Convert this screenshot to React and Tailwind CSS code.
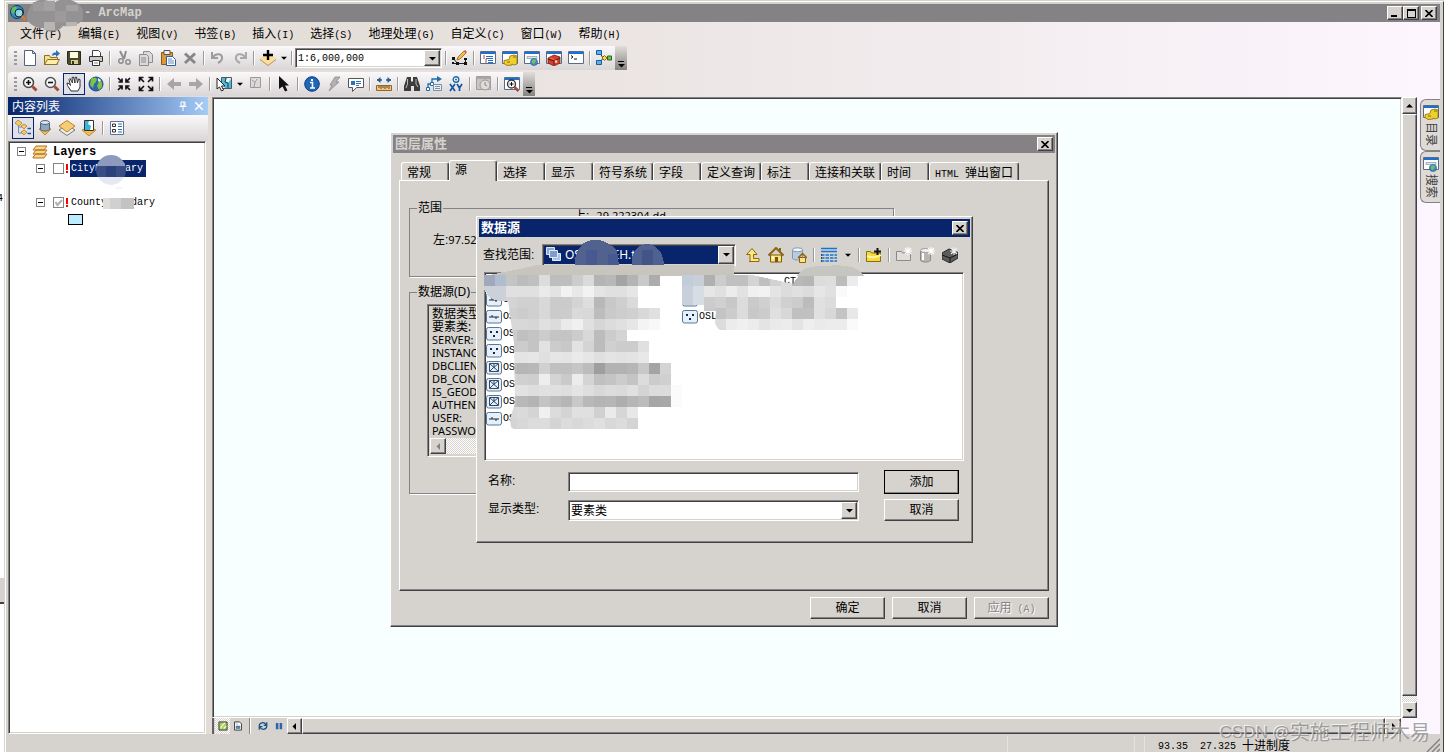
import { useState } from 'react';
import clsx from 'clsx';

const raised = 'border border-t-white border-l-white border-r-[#424142] border-b-[#424142] shadow-[inset_-1px_-1px_0_#848284] bg-[#d6d3ce]';
const sunken = 'border border-t-[#848284] border-l-[#848284] border-r-white border-b-white shadow-[inset_1px_1px_0_#424142,inset_-1px_-1px_0_#d6d3ce]';
const barBg = 'bg-linear-to-b from-[#fbf8fb] to-[#dad6d6]';
const hatch = 'bg-[repeating-conic-gradient(#fff_0_25%,#d6d3ce_0_50%)] bg-size-[2px_2px]';
const mono = 'font-["Liberation_Mono","Noto_Sans_CJK_SC",monospace] text-[10px]';

const windowFrame = (
    <>
        <path d="M.5 1.5h15v12H.5z" fill="#fff" stroke="#5a6b84" />
        <path d="M1 2h14v2H1z" fill="#1d6fd0" />
    </>
);

const icons = {
    newDoc: <path d="M2.500 .5h8l3 3v12h-11zM10.500 .5v3h3" fill="#fff" stroke="#56647a" />,
    open: <><path d="M.5 14.500v-9h5l1 2h7v7z" fill="#f6e08c" stroke="#8c7020" /><path d="M.5 14.500l3-5h12l-3 5z" fill="#ffeea8" stroke="#8c7020" /><path d="M8 6c0-3 2-4 4-3.500V0l4 3.500L12 7V5c-2 0-3 0-4 1z" fill="#2b71b8" /></>,
    save: <><path d="M1.500 1.500h13v13h-12l-1-1z" fill="#4c4a2c" stroke="#2c2a18" /><path d="M4 2h8v6H4z" fill="#fffbe0" /><path d="M5 10h7v4H5z" fill="#d9cf92" /><path d="M6 11h2v3H6z" fill="#333" /></>,
    print: <><path d="M4.500 6V.5h6l2 2V6" fill="#fff" stroke="#444" /><path d="M1.500 6.500h13v5h-13z" fill="#c9c9c9" stroke="#333" /><path d="M4.500 10.500h7v5h-7z" fill="#fff" stroke="#333" /><path d="M6 13h4" stroke="#888" /><path d="M12 8h2v1h-2z" fill="#e8c020" /></>,
    cut: <><path d="M4 1l4 8M10 1L8 9" stroke="#8e8e8e" strokeWidth="2" fill="none" /><circle cx="5" cy="11" r="2.200" fill="none" stroke="#8e8e8e" strokeWidth="1.500" /><circle cx="12" cy="12" r="2.200" fill="none" stroke="#8e8e8e" strokeWidth="1.500" /></>,
    copy: <><path d="M5.500 1.500h6l3 3v8h-9z" fill="#dcdad8" stroke="#8e8e8e" /><path d="M1.500 4.500h7l2 2v9h-9z" fill="#dcdad8" stroke="#8e8e8e" /><path d="M3 8h5M3 10h5M3 12h5" stroke="#8e8e8e" /></>,
    paste: <><path d="M1.500 2.500h11v12h-11z" fill="#d99a3c" stroke="#8a5a18" /><path d="M4 .5h6v4H4z" fill="#eee" stroke="#555" /><path d="M6.500 6.500h6l3 3v6h-9z" fill="#fff" stroke="#2f5f94" /><path d="M8 9h4M8 11h6M8 13h6" stroke="#5d8cc0" /></>,
    remove: <path d="M3 3.500l10 9.500M13 3.500L3 13" stroke="#8a8886" strokeWidth="3" />,
    undo: <path d="M2 2v6h6M3 7c3-4 10-4 9 2-.5 2-2 3-4 4" fill="none" stroke="#9c9c9c" strokeWidth="2" />,
    redo: <path d="M14 2v6H8M13 7C10 3 3 3 4 9c.5 2 2 3 4 4" fill="none" stroke="#a8a8a8" strokeWidth="2" />,
    addData: <><path d="M0 8l8-4 8 4-8 6z" fill="#ffdf90" /><path d="M0 9l8 6 8-6v1l-8 6-8-6z" fill="#c98a2c" /><path d="M8 0v10M3 5h10" stroke="#000" strokeWidth="2.400" /></>,
    editor: <><path d="M1.500 8.500l4 5h8M1.500 13.500l4 0M13.500 13.500v-5" stroke="#222" fill="none" /><path d="M0 7h3v3H0zM4 12h3v3H4zM0 12h2v2H0zM12 12h3v3h-3zM12 8h3v2h-3z" fill="#111" /><path d="M5 10l1-3 6-6 2 2-6 6z" fill="#f7bf4a" stroke="#94601c" strokeWidth=".8" /><path d="M12 1l2 2 1-1-2-2z" fill="#e05050" /></>,
    toc: <>{windowFrame}<path d="M3 6h2M3 8h2M5 10h2M5 12h2" stroke="#d33" /><path d="M6 6.500h7M6 8.500h7M8 10.500h5M8 12.500h5" stroke="#1d6fd0" /></>,
    catalog: <>{windowFrame}<path d="M8 6l4-1 3 1v8l-3 1-2-1v1l-5 .500-3-2v-3l5-1z" fill="#efcf2f" stroke="#8a6d00" strokeWidth=".8" /><path d="M11 7h3M5 12h3" stroke="#8a6d00" /></>,
    search: <>{windowFrame}<path d="M3 6.500h10v2H3z" fill="#dfe6ee" stroke="#8296aa" strokeWidth=".7" /><circle cx="10" cy="12" r="3.600" fill="#3e86cc" stroke="#2c5f94" strokeWidth=".6" /><path d="M8 10l3-1 1 2-2 3-2-1z" fill="#74c060" /></>,
    toolbox: <>{windowFrame}<path d="M2 8l6-3 6 2v6l-6 3-6-3z" fill="#d4402c" stroke="#7c1c10" strokeWidth=".8" /><path d="M2 9l6 2 6-3M8 11v4" fill="none" stroke="#661408" /><path d="M4 8l4 1.500M9 10.500h2v2H9z" fill="#eee" stroke="#f0a090" strokeWidth=".6" /></>,
    python: <>{windowFrame}<path d="M3 5.500l2 1.500-2 1.500M6 9h3" fill="none" stroke="#111" /></>,
    model: <><path d="M4 3l3 5-3 5M7 8h6" fill="none" stroke="#333" /><path d="M.5 .5h5v4h-5zM.5 10.500h5v4h-5z" fill="#56b4f0" stroke="#14609c" /><path d="M6 8l2.500-2.500L11 8l-2.500 2.500z" fill="#ffd84a" stroke="#8c6a10" /><path d="M11.500 6h4v4h-4z" fill="#6cc05c" stroke="#246c1c" /></>,
    zoomIn: <><circle cx="6.500" cy="6.500" r="5" fill="#f4f8fa" stroke="#444" strokeWidth="1.500" /><path d="M4 6.500h5M6.500 4v5" stroke="#111" strokeWidth="1.600" /><path d="M10.500 10.500l4 4" stroke="#a44a36" strokeWidth="3" /></>,
    zoomOut: <><circle cx="6.500" cy="6.500" r="5" fill="#f4f8fa" stroke="#555" strokeWidth="1.500" /><path d="M4 6.500h5" stroke="#111" strokeWidth="1.600" /><path d="M10.500 10.500l4 4" stroke="#a44a36" strokeWidth="3" /></>,
    pan: <path d="M5 15L1.500 9.500 1 7l2 .5 1.500 2L3 3.500 4 2.500 6.500 7 6 1.500 7.500 1 9 7V1.500l1.500-.5L11.500 7l1-4 1.500.5V11l-2 4z" fill="#fff" stroke="#333" />,
    globe: <><circle cx="8" cy="8" r="7" fill="#2c66b0" stroke="#1c4c88" /><path d="M3 3c3-2 5-1 6 0L8 6 6 8l-1 4-3-3zM11 5l3 1v5l-3 3-2-4z" fill="#7cc444" /><path d="M10 2l3 2-1 2-2-1z" fill="#e8f4c0" /></>,
    zoomInFixed: <path d="M2 2l3 3M14 2l-3 3M2 14l3-3M14 14l-3-3M6 2.500V6H2.500M10 2.500V6h3.500M6 13.500V10H2.500M10 13.500V10h3.500" fill="none" stroke="#111" strokeWidth="1.700" />,
    zoomOutFixed: <path d="M2 2l4 4M14 2l-4 4M2 14l4-4M14 14l-4-4M5.500 1.500h-4v4M10.500 1.500h4v4M5.500 14.500h-4v-4M10.500 14.500h4v-4" fill="none" stroke="#111" strokeWidth="1.700" />,
    back: <path d="M1 8l7-6v4h7v4H8v4z" fill="#a8a6a4" />,
    forward: <path d="M15 8L8 2v4H1v4h7v4z" fill="#a8a6a4" />,
    selectFeatures: <><path d="M5.500 1.500h10v11h-10z" fill="#dff4fa" stroke="#555" /><path d="M6 2h5L9 5l3 2 3-4v9H9L6 6z" fill="#44bfe0" /><path d="M10 2l-1 4 3 1v5" stroke="#333" fill="none" /><path d="M1 2l8 8H5.500l2 4-2 1-2-4L1 13z" fill="#fff" stroke="#222" /></>,
    clearSelection: <path d="M2.500 1.500h10v10h-10zM4 4l3 2 2-3M7 6l-1 5" fill="#dcdad8" stroke="#9c9a98" />,
    cursor: <path d="M3 0l10 9.500H9l2.500 5-2.500 1-2.500-5L3 13z" fill="#111" />,
    identify: <><circle cx="8" cy="8" r="7.300" fill="#1d66b8" stroke="#0c3c80" /><path d="M6 6.500h2.500v5M6 12h5" stroke="#fff" strokeWidth="1.600" fill="none" /><path d="M7 3h2v2H7z" fill="#fff" /></>,
    bolt: <path d="M9 1h5l-4 5h3L3 15l3-6H4z" fill="#b4b2b0" stroke="#8e8c8a" strokeWidth=".8" />,
    popup: <><path d="M.5 2.500h15v9h-7l-4 4v-4h-4z" fill="#fff" stroke="#555" /><path d="M3 5h4v4H3z" fill="#2b71b8" /><path d="M8 5.500h5M8 7.500h5M8 9.500h3" stroke="#2b71b8" /></>,
    measure: <><path d="M1 4h5M10 4h5" stroke="#1c5c9c" strokeWidth="1.500" /><path d="M4.500 1L1 4l3.500 3zM11.500 1L15 4l-3.500 3z" fill="#1c5c9c" /><path d="M.5 9.500h15v5H.5z" fill="#ecc880" stroke="#94642c" /><path d="M3 10v2M5 10v3M7 10v2M9 10v3M11 10v2M13 10v3" stroke="#6c441c" /></>,
    find: <><path d="M3 1h4v4l1 1 1-1V1h4l3 9v5h-6v-5H7v5H0v-5z" fill="#3c3c3c" /><path d="M3.500 3v5L2 12M12 3v5l2 3" stroke="#b8b8b8" fill="none" /></>,
    findRoute: <><path d="M2 13V8h4V3h8" stroke="#1c6cac" fill="none" strokeWidth="1.300" /><path d="M11 0l5 3-5 3z" fill="#1c6cac" /><path d="M.5 11.500h3v3h-3zM4.500 6.500h3v3h-3z" fill="#fff" stroke="#1c6cac" /><path d="M7.500 8.500h8v6h-8z" fill="#e8f0f4" stroke="#7690a4" /><path d="M9 10.500h5M9 12.500h5" stroke="#7690a4" /></>,
    goToXY: <><circle cx="8" cy="3.500" r="2.800" fill="#fff" stroke="#1c6cac" strokeWidth="1.400" /><circle cx="8" cy="3.500" r="1" fill="#1c6cac" /><path d="M2 8l5 7M7 8l-5 7M9 8l2.500 4L14 8M11.500 12v3" stroke="#1554a0" strokeWidth="1.700" fill="none" /></>,
    time: <><path d="M.5 .5h14v13H.5z" fill="#c8c6c2" stroke="#a09e9c" /><path d="M1 1h13v2H1z" fill="#aaa8a6" /><circle cx="9" cy="9" r="5" fill="#dedcd8" stroke="#9c9a98" /><path d="M9 6v3l2 1" stroke="#888" fill="none" /></>,
    viewer: <>{windowFrame}<circle cx="7.500" cy="8" r="4" fill="#f4f8fa" stroke="#333" strokeWidth="1.300" /><path d="M5.500 8h4M7.500 6v4" stroke="#111" /><path d="M10.500 11l4 4" stroke="#a44a36" strokeWidth="2.500" /></>,
    byOrder: <><path d="M3.500 6v7H8M3.500 7H8" stroke="#7890a8" fill="none" /><path d="M0 3l3-3 4 3-3 3zM6 6l3-2 3 2-3 3zM6 12l3-2 3 2-3 3z" fill="#f4c86c" stroke="#b4822c" strokeWidth=".8" /><path d="M12.500 8.500H16M12.500 13.500H16" stroke="#1c5c9c" strokeWidth="1.500" /></>,
    bySource: <><path d="M2 9l6 6 6-6-6-2z" fill="#f6bc4c" stroke="#b47c1c" strokeWidth=".8" /><path d="M3.500 2.500v7c2 2 7 2 9 0v-7z" fill="#8fa6be" stroke="#4c627c" /><ellipse cx="8" cy="2.500" rx="4.500" ry="2" fill="#dbe6f0" stroke="#4c627c" /></>,
    byVisibility: <><path d="M0 10l8-5 8 5-8 5.500z" fill="#eee" stroke="#777" /><path d="M0 6l8-5.500L16 6l-8 6z" fill="#f8cc74" stroke="#b4822c" /></>,
    bySelection: <><path d="M1 10l7 6 7-6-7-3z" fill="#f6bc4c" stroke="#b47c1c" strokeWidth=".8" /><path d="M3.500 .5h9v10h-9z" fill="#fff" stroke="#333" /><path d="M4 1h4L7 4l3 2-1 4H4z" fill="#36b4dc" /></>,
    options: <><path d="M1.500 1.500h13v13h-13z" fill="#fff" stroke="#5a7494" /><path d="M3.500 4h3v2.500h-3zM3.500 9.500h3V12h-3z" fill="#fff" stroke="#333" /><path d="M9 4h4M9 6.500h4M9 9.500h4M9 12h4" stroke="#2b71b8" /></>,
    layers: <path d="M1 13l3-3h11l-3 4H1zM1 10l3-4h11l-3 4zM1 6l3-4h11l-3 4z" fill="#f8d48c" stroke="#b0741c" />,
    up: <path d="M4 14.500h10v-3H8.500v-4H12L7 1.500 1.500 7.500h3.500v7z" fill="#ffe680" stroke="#8c6a08" />,
    home: <><path d="M2.500 8h11v7h-11z" fill="#ffe27c" stroke="#7c5c10" /><path d="M.5 8.500L8 1l7.500 7.500M12 4V1" stroke="#8c6410" strokeWidth="2" fill="none" /><path d="M7 10h3v5H7z" fill="#7c5410" /><path d="M4 9.500h2v2H4z" fill="#fff" /></>,
    homeDb: <><path d="M1.500 2.500v9c2 2 8 2 10 0v-9z" fill="#b8cde2" stroke="#7f97b0" /><ellipse cx="6.500" cy="2.800" rx="5" ry="2" fill="#eef5fb" stroke="#7f97b0" /><path d="M8.500 10.500h6v5h-6z" fill="#ffe27c" stroke="#8c6410" /><path d="M7 11l4.500-4.500L16 11" stroke="#8c6410" fill="none" strokeWidth="1.500" /></>,
    details: <><path d="M0 1.500h16M0 4.500h16" stroke="#1874d0" strokeWidth="1.600" /><path d="M0 8h16M0 11h16M0 14h16" stroke="#1874d0" strokeWidth="1.300" strokeDasharray="3.500 1" /><path d="M.5 7v9" stroke="#444" strokeDasharray="2 1" /></>,
    connect: <><path d="M.5 14.500V4.500h4l1 1.500h9v8.500z" fill="#f8d93c" stroke="#86700c" /><path d="M1 9c5 2 9 2 14-1" stroke="#fff4a8" strokeWidth="2" /><path d="M11.500 1v7M8 4.500h7" stroke="#111" strokeWidth="2" /></>,
    newFolder: <><path d="M.5 13.500v-9h5l1 1.500h8v7.500z" fill="#e0dedb" stroke="#8c8a88" /><path d="M12 0v8M8 4h8M9 1l6 6M15 1L9 7" stroke="#fff" strokeWidth="1.100" /></>,
    newDb: <><path d="M1.500 3.500v10c2 2 8 2 10 0v-10z" fill="#b8b6b4" stroke="#8c8a88" /><ellipse cx="6.500" cy="3.500" rx="5" ry="2" fill="#f4f4f4" stroke="#999" /><path d="M4 6v7" stroke="#fff" strokeWidth="2" /><path d="M12 0v8M8 4h8M9 1l6 6M15 1L9 7" stroke="#fff" strokeWidth="1.100" /></>,
    newToolbox: <><path d="M0 6l7-4 9 3v6l-8 5-8-4z" fill="#5c5c5c" stroke="#2c2c2c" /><path d="M0 8l8 3 8-4M8 11v5" stroke="#161616" fill="none" /><path d="M12 0v8M8 4h8M9 1l6 6M15 1L9 7" stroke="#eee" strokeWidth="1.100" /></>,
    dataset: <><path d="M.5 .5h8v7h-8z" fill="#8fa9d4" stroke="#dbe6f8" /><path d="M6.500 6.500h8v7h-8z" fill="#a9bfe4" stroke="#e6eefa" /><path d="M3.500 3.500h8v7h-8z" fill="#7f9ccc" stroke="#dbe6f8" /></>,
    mapView: <><path d="M1.500 1.500h13v13h-13z" fill="#a8cc5c" stroke="#333" strokeWidth="1.500" /><path d="M4 12l3-5 4-4M9 12l4-4" stroke="#f4f8d0" strokeWidth="2" /></>,
    layoutView: <><path d="M2.500 1.500h8l3 3v10h-11z" fill="#fff" stroke="#333" strokeWidth="1.500" /><path d="M5 8h6v4H5zM5 5h3" fill="#4c8cc8" stroke="#333" strokeWidth=".6" /></>,
    refresh: <path d="M2 8c0-6 8-7 11-2M14 2v5H9M14 8c0 6-8 7-11 2M2 14V9h5" stroke="#14508c" strokeWidth="2" fill="none" />,
    pause: <path d="M3 3h4v10H3zM9 3h4v10H9z" fill="#2c64ac" />,
};

function Icon({ name, className = 'h-4 w-4' }) {
    return (
        <svg viewBox="0 0 16 16" fill="none" className={clsx('shrink-0', className)} aria-hidden="true">
            {icons[name]}
        </svg>
    );
}

function Arrow({ dir = 'down', className = 'h-[7px] w-[7px] fill-black' }) {
    const paths = { down: 'M0 2h7L3.500 5.500z', up: 'M0 5.500h7L3.500 2z', left: 'M5 0v7L1.500 3.500z', right: 'M2 0v7l3.500-3.500z' };
    return <svg viewBox="0 0 7 7" className={clsx('shrink-0', className)} aria-hidden="true"><path d={paths[dir]} /></svg>;
}

function Separator() {
    return <span className="mx-[2px] h-[14px] w-[2px] shrink-0 border-l border-[#9c9a98] border-r border-r-white" />;
}

function ToolButton({ name, pressed }) {
    return (
        <button type="button" aria-label={name} className={clsx('flex h-[22px] w-[22px] shrink-0 items-center justify-center', pressed && 'border border-[#08246b] bg-[#dfe0ea]')}>
            <Icon name={name} />
        </button>
    );
}

function Toolbar({ items }) {
    return (
        <div className={clsx('flex h-6 items-center self-start rounded-l', barBg)}>
            <span className="mr-[2px] ml-[6px] h-[14px] w-[3px] bg-[repeating-linear-gradient(#9c9a98_0_2px,transparent_2px_4px)]" />
            {items.map((item, i) => {
                if (item === '|') return <Separator key={i} />;
                if (item === 'v') return <button key={i} type="button" aria-label="more" className="flex w-[10px] justify-center"><Arrow className="h-[6px] w-[6px] fill-black" /></button>;
                if (item === 'scale') return <ScaleBox key={i} />;
                return <ToolButton key={i} name={item} pressed={item === 'pan'} />;
            })}
            <button type="button" aria-label="toolbar options" className="flex h-6 w-3 flex-col items-center justify-end bg-linear-to-b from-[#e0dddb] to-[#85837f] pb-px">
                <span className="h-px w-[6px] bg-black" />
                <Arrow />
            </button>
        </div>
    );
}

function ScaleBox() {
    return (
        <div className={clsx('mr-px flex h-5 w-[147px] bg-white p-px', sunken)}>
            <select aria-label="scale" className={clsx('min-w-0 flex-1 appearance-none bg-transparent pl-px outline-none', mono)}>
                <option>1:6,000,000</option>
            </select>
            <span className={clsx('flex w-4 items-center justify-center', raised)}><Arrow /></span>
        </div>
    );
}

const menus = [['文件', 'F'], ['编辑', 'E'], ['视图', 'V'], ['书签', 'B'], ['插入', 'I'], ['选择', 'S'], ['地理处理', 'G'], ['自定义', 'C'], ['窗口', 'W'], ['帮助', 'H']];
const standardTools = ['newDoc', 'open', 'save', 'print', '|', 'cut', 'copy', 'paste', 'remove', '|', 'undo', 'redo', '|', 'addData', 'v', '|', 'scale', '|', 'editor', '|', 'toc', 'catalog', 'search', 'toolbox', 'python', '|', 'model'];
const navTools = ['zoomIn', 'zoomOut', 'pan', 'globe', '|', 'zoomInFixed', 'zoomOutFixed', '|', 'back', 'forward', '|', 'selectFeatures', 'v', 'clearSelection', '|', 'cursor', '|', 'identify', 'bolt', 'popup', '|', 'measure', '|', 'find', 'findRoute', 'goToXY', '|', 'time', '|', 'viewer'];

function TitleBar() {
    return (
        <header className="relative flex h-[18px] shrink-0 items-center bg-[#848284] pl-[2px] text-[#d6d3ce]">
            <svg viewBox="0 0 16 16" className="h-4 w-4"><circle cx="7" cy="7" r="6.500" fill="#2c8ccc" stroke="#063c74" /><path d="M2 3c3-3 6-1 5 2L4 9 1 7zM8 8l4-3 1 4-4 3z" fill="#5cc060" /><circle cx="9" cy="8" r="4" fill="#b8ecf8" fillOpacity=".7" stroke="#123" /><path d="M12 11l3.500 4" stroke="#e07828" strokeWidth="2.500" /></svg>
            <h1 className="ml-[58px] font-['Liberation_Mono',monospace] text-[12px] font-bold whitespace-pre">- ArcMap</h1>
            <svg viewBox="0 0 58 34" className="absolute -top-[5px] left-[19px] h-[34px] w-[58px]" aria-hidden="true">
                <path d="M2 10C6 0 18-2 26 5c8-8 24-6 30 6v10c-6 6-14 7-20 6-4 6-15 8-20 2-8 0-15-5-17-10z" fill="#959294" />
                <path d="M6 3h11v9H6zM28 12h11v11H28z" fill="#9c9a9b" />
                <path d="M17 2h11v10H17zM39 6h12v6H39z" fill="#a3a1a1" />
                <path d="M17 23h11v8H17zM39 23h11v4H39z" fill="#b8b5b2" />
            </svg>
            <div className="ml-auto flex pr-[3px]">
                <button type="button" aria-label="minimize" className={clsx('flex h-[14px] w-4 items-end pb-[2px] pl-[3px]', raised)}><span className="h-[2px] w-[6px] bg-black" /></button>
                <button type="button" aria-label="maximize" className={clsx('flex h-[14px] w-4 items-center justify-center', raised)}><span className="h-[9px] w-[9px] border border-t-2 border-black" /></button>
                <CloseButton className="ml-[2px]" />
            </div>
        </header>
    );
}

function CloseButton({ className }) {
    return (
        <button type="button" aria-label="close" className={clsx('flex h-[14px] w-4 items-center justify-center', raised, className)}>
            <svg viewBox="0 0 8 7" className="h-[7px] w-2"><path d="M.5 0l7 7M7.500 0l-7 7" stroke="#000" strokeWidth="1.600" /></svg>
        </button>
    );
}

function Expander() {
    return <button type="button" aria-label="collapse" className="flex h-[9px] w-[9px] items-center justify-center border border-[#848284]"><span className="h-px w-[5px] bg-black" /></button>;
}

function LayerRow({ name, checked, selected, children }) {
    const [on, setOn] = useState(checked);
    return (
        <div className="relative flex h-[17px] items-center pl-[25px]">
            <Expander />
            <label className="ml-2 flex h-[17px] items-center">
                <span className="relative flex h-[11px] w-[11px]">
                    <input type="checkbox" checked={on} onChange={() => setOn(!on)} className="h-[11px] w-[11px] appearance-none border border-[#848284] bg-white" />
                    {on && <svg viewBox="0 0 11 11" className="pointer-events-none absolute inset-0"><path d="M2.500 5l2 3L9 3" stroke="#b0b0b0" strokeWidth="2" fill="none" /></svg>}
                </span>
                <span className="mr-px flex w-[5px] flex-col items-center gap-px"><span className="h-[6px] w-[2px] bg-[#f00]" /><span className="h-[2px] w-[2px] bg-[#f00]" /></span>
                <span className={clsx('h-[17px] px-px pr-[3px] leading-[17px]', mono, selected && 'bg-[#08246b] text-white')}>{name}</span>
            </label>
            {children}
        </div>
    );
}

function ContentsPanel() {
    return (
        <aside className="flex w-[200px] shrink-0 flex-col">
            <div className="flex h-[18px] items-center bg-linear-to-r from-[#08246b] to-[#a5cbf7] pr-[5px] pl-1 text-[12px] text-white">
                <span className="pt-[2px] leading-4">内容列表</span>
                <svg viewBox="0 0 8 10" className="mr-2 ml-auto h-[10px] w-2"><path d="M2 1h4v4H2zM5 1v4M.5 5.500h7M4 6v4" stroke="#fff" fill="none" /></svg>
                <svg viewBox="0 0 8 8" className="h-2 w-2"><path d="M0 0l8 8M8 0L0 8" stroke="#fff" strokeWidth="1.500" /></svg>
            </div>
            <div className={clsx('flex h-[26px] items-center pl-1', barBg)}>
                <ToolButton name="byOrder" pressed />
                <ToolButton name="bySource" />
                <ToolButton name="byVisibility" />
                <ToolButton name="bySelection" />
                <Separator />
                <ToolButton name="options" />
            </div>
            <div className={clsx('mr-[2px] flex-1 bg-white pt-px pl-[2px]', sunken)}>
                <div className="flex h-[17px] items-center pl-[6px]">
                    <Expander />
                    <Icon name="layers" className="ml-[6px] h-4 w-4" />
                    <span className="ml-[5px] font-['Liberation_Mono',monospace] text-[12px] font-bold">Layers</span>
                </div>
                <LayerRow name="CityBoundary" selected>
                    <svg viewBox="0 0 32 34" className="absolute -top-[5px] left-[84px] h-[34px] w-8">
                        <clipPath id="cityMask"><circle cx="16" cy="15" r="15" /></clipPath>
                        <g clipPath="url(#cityMask)">
                            <path d="M0 0h32v11H0z" fill="#8e9abd" />
                            <path d="M0 11h32v11H0z" fill="#384d86" />
                            <path d="M11 11h10v11H11z" fill="#2c417c" />
                            <path d="M0 22h32v9H0z" fill="#e5e9f4" />
                        </g>
                        <path d="M21 33h6" stroke="#e5e9f4" />
                    </svg>
                </LayerRow>
                <div className="mt-[17px]">
                    <LayerRow name="CountyBoundary" checked>
                        <svg viewBox="0 0 31 11" className="absolute top-[4px] left-[92px] h-[11px] w-[31px]">
                            <path d="M0 0h7v11H0z" fill="#ddd" /><path d="M7 0h11v11H7z" fill="#d0d0d0" /><path d="M18 0h13v11H18z" fill="#c3c3c3" />
                        </svg>
                    </LayerRow>
                </div>
                <div className="mt-[3px] ml-[57px] h-[11px] w-[15px] border border-black bg-[#bdebff]" />
            </div>
        </aside>
    );
}

function DockTab({ icon, label }) {
    return (
        <button type="button" className="flex h-[52px] flex-col items-center gap-[2px] rounded-l-md border border-r-0 border-[#848284] bg-[#dedad6] pt-1 text-[12px] text-[#424142]">
            <Icon name={icon} />
            <span className="leading-[14px] [text-orientation:sideways] [writing-mode:vertical-rl]">{label}</span>
        </button>
    );
}

function MapArea() {
    return (
        <main className="mr-[3px] flex min-w-0 flex-1 flex-col">
            <div className="flex min-h-0 flex-1">
                <div className={clsx('flex-1 bg-[#f7ffff]', sunken)} />
                <div className={clsx('flex w-[15px] flex-col', hatch)}>
                    <button type="button" aria-label="scroll up" className={clsx('flex h-[17px] items-center justify-center', raised)}><Arrow dir="up" /></button>
                    <div className={clsx('flex-1', raised)} />
                    <div className="h-[6px]" />
                    <button type="button" aria-label="scroll down" className={clsx('flex h-4 items-center justify-center', raised)}><Arrow /></button>
                </div>
            </div>
            <div className="mr-4 flex h-4 items-stretch bg-[#d6d3ce]">
                <span className="w-[3px] border-l-2 border-[#636163]" />
                <button type="button" aria-label="data view" className={clsx('flex w-[15px] items-center justify-center', hatch)}><Icon name="mapView" className="h-[10px] w-[10px]" /></button>
                <button type="button" aria-label="layout view" className="flex w-[15px] items-center justify-center"><Icon name="layoutView" className="h-[10px] w-[10px]" /></button>
                <span className="mx-[4px] w-[2px] border-r border-l border-l-[#848284] border-r-white" />
                <button type="button" aria-label="refresh" className="flex w-4 items-center justify-center"><Icon name="refresh" className="h-[10px] w-[10px]" /></button>
                <button type="button" aria-label="pause" className="flex w-4 items-center justify-center"><Icon name="pause" className="h-[10px] w-[10px]" /></button>
                <button type="button" aria-label="scroll left" className={clsx('flex w-[15px] items-center justify-center', raised)}><Arrow dir="left" /></button>
                <div className={clsx('flex-1', raised)} />
                <button type="button" aria-label="scroll right" className={clsx('flex w-4 items-center justify-center', raised)}><Arrow dir="right" /></button>
            </div>
        </main>
    );
}

function Dialog({ title, active, className, children }) {
    return (
        <section role="dialog" aria-label={title} className={clsx('absolute flex flex-col p-[2px]', raised, className)}>
            <div className={clsx('flex h-[18px] shrink-0 items-center pr-[2px] pl-[2px] text-[13px] font-bold', active ? 'bg-[#08246b] text-white' : 'bg-[#848284] text-[#d6d3ce]')}>
                {title}
                <CloseButton className="ml-auto" />
            </div>
            {children}
        </section>
    );
}

function PushButton({ children, primary, disabled }) {
    return (
        <button type="button" disabled={disabled} className={clsx('w-[75px] text-[12px]', raised, primary ? 'h-6 outline outline-1 -outline-offset-1 outline-black' : 'h-[22px]', disabled && 'text-[#848284] [text-shadow:1px_1px_0_#fff]')}>
            {children}
        </button>
    );
}

const tabs = ['常规', '源', '选择', '显示', '符号系统', '字段', '定义查询', '标注', '连接和关联', '时间', 'HTML 弹出窗口'];
const sourceLines = ['数据类型', '要素类:', 'SERVER:', 'INSTANC', 'DBCLIENT', 'DB_CONN', 'IS_GEOD', 'AUTHENT', 'USER:', 'PASSWO'];

function LayerProperties() {
    return (
        <Dialog title="图层属性" className="top-[132px] left-[390px] w-[668px]">
            <div className="px-[6px] pt-[7px] pb-[5px]">
                <div role="tablist" className="flex h-[20px] items-end pl-[2px]">
                    {tabs.map((tab) => (
                        <button
                            key={tab}
                            type="button"
                            role="tab"
                            aria-selected={tab === '源'}
                            className={clsx(
                                'min-w-12 rounded-t-[3px] border border-b-0 border-t-white border-l-white border-r-[#424142] bg-[#d6d3ce] pl-[5px] text-left text-[12px] leading-4 whitespace-nowrap shadow-[inset_-1px_0_0_#848284]',
                                tab === '源' ? 'relative -mb-px h-[21px] pb-[2px]' : 'h-[18px] pt-[2px] pr-[5px]'
                            )}
                        >
                            {tab.startsWith('HTML') ? <><span className={mono}>HTML </span>弹出窗口</> : tab}
                        </button>
                    ))}
                </div>
                <div className={clsx('min-h-[411px] pt-[19px] pr-[154px] pl-[9px]', raised)}>
                    <fieldset className="h-[77px] border border-[#848284] pl-[23px] text-[12px] shadow-[1px_1px_0_#fff]">
                        <legend className="-ml-4 px-px leading-4">范围</legend>
                        <div className="-mt-2 mb-2 flex h-4 items-center pl-[141px] leading-4">上: <span className="pl-[7px] font-['Noto_Sans',sans-serif] text-[11px]">29.222304 dd</span></div>
                        <div className="leading-4">左:<span className="font-['Noto_Sans',sans-serif] text-[11px]">97.52</span></div>
                    </fieldset>
                    <fieldset className="mt-[7px] h-[210px] border border-[#848284] pl-[17px] text-[12px] shadow-[1px_1px_0_#fff]">
                        <legend className="-ml-[10px] px-px leading-4">数据源<span className="font-['Noto_Sans',sans-serif]">(D)</span></legend>
                        <div className={clsx('mt-1 mr-4 overflow-hidden p-[2px]', sunken)}>
                            <ul className="h-[131px] pl-[2px] font-['Noto_Sans','Noto_Sans_CJK_SC',sans-serif] text-[11px] leading-[13px]">
                                {sourceLines.map((line, i) => <li key={line} className={clsx(i < 2 && 'text-[12px]')}>{line}</li>)}
                            </ul>
                            <div className={clsx('flex h-4', hatch)}>
                                <button type="button" aria-label="scroll left" className={clsx('flex w-4 items-center justify-center', raised)}><Arrow dir="left" className="h-[7px] w-[7px] fill-[#848284]" /></button>
                            </div>
                        </div>
                    </fieldset>
                </div>
                <div className="mt-[6px] flex justify-end gap-[7px]">
                    <PushButton>确定</PushButton>
                    <PushButton>取消</PushButton>
                    <PushButton disabled>应用<span className={mono}> (A)</span></PushButton>
                </div>
            </div>
        </Dialog>
    );
}

const browserTools = ['up', 'home', 'homeDb', '|', 'details', 'v', '|', 'connect', '|', 'newFolder', 'newDb', 'newToolbox'];

const featureGlyphs = {
    line: <path d="M3 7h10M6 5v2M10 7v2" stroke="#223" />,
    point: <path d="M4 4h2v2H4zM10 4h2v2h-2zM7 8h2v2H7z" fill="#223" />,
    polygon: <path d="M3.500 2.500h9v8h-9zM4 3l8 7M12 3l-5 4-3 3M8 7V3" stroke="#334a66" fill="none" />,
};

function FeatureItem({ kind, name }) {
    return (
        <li className="flex h-[17px] items-center">
            <svg viewBox="0 0 16 14" className="h-[14px] w-4" aria-hidden="true">
                <rect x=".5" y=".5" width="15" height="12.500" rx="2" fill="#e4f0fc" stroke="#5a7494" />
                {featureGlyphs[kind]}
            </svg>
            <span className={clsx('pl-px', mono)}>{name}</span>
        </li>
    );
}

const leftItems = [['line', 'OSL'], ['line', 'OSL'], ['line', 'OSL'], ['point', 'OSL'], ['point', 'OSL'], ['polygon', 'OSL'], ['polygon', 'OSL'], ['polygon', 'OSL'], ['line', 'OSL']];
const rightItems = [['point', 'OSL'], ['point', 'OSL'], ['point', 'OSL']];

// grey level of each 11px block, one string per row
const leftBlocks = [
    '-- -- c4 bc c0 dc bd be cc da b4 b8 a4 b4 c9 ac',
    '-- -- e0 e0 e0 ea e3 f2 e8 f2 e4 e0 e0 e6',
    '-- -- d4 d0 d0 d8 cb cb d4 de b8 c8 cf da',
    '-- -- d0 cc d0 d8 cb cc da d8 bd ca cd d0 d8 e0',
    '-- -- d8 d8 d6 e0 dc ea f0 e0 d6 dc e0 e6 f4 f8',
    '-- -- cc c0 c4 cc c4 c4 cc d8 bc cc d4',
    '-- -- cc cc c4 e2 cc c8 e2 d4 bc d0 cc cc e0',
    '-- -- e4 e4 e6 e0 e6 e4 ea e6 e0 e4 e2 e4 e8',
    '-- -- bc b6 b8 d0 c0 c0 c6 bc 9e b2 b2 b6 c8 a4 d4',
    '-- -- d4 d0 ce ee d4 ca ec d4 c0 c4 cc c4 dc cc d0',
    '-- -- e0 e2 de e0 e0 de e4 de d8 dc da e0 d4 dc dc fb',
    '-- -- c0 b8 b4 c4 bc b6 c8 b8 b4 b6 ae b6 bc a6 a8 fb',
    '-- -- d8 da d4 f0 dc d4 e0 e0 d0 ea d6 e8',
    '-- -- d4 d8 dc dc d4 dc d8 dc e0 d8 dc d4',
];
const rightBlocks = [
    '-- -- b0 cc c0 c0 d4 c0 d2 dc b8 b6 dc de bc ec',
    '-- -- e6 e0 ec e2 f0 f2 e4 dc e0 dc e6 e0 fa',
    '-- -- cc d0 c8 dc ca d0 dc d0 cc bc e0 dc',
    '-- -- ca c4 cc dc c8 cc e0 d8 c0 c0 e0 d8 c4 e8',
    '-- -- e8 dc ec f0 ec e4 ea ec e4 ee ea ec ec fa',
];

function Blocks({ rows, x, y }) {
    return rows.map((row, r) => row.split(' ').map((v, c) => (
        v !== '--' && <rect key={`${r}-${c}`} x={x + c * 11} y={y + r * 11} width="11" height="11" fill={`#${v}${v}${v}`} />
    )));
}

function Redaction() {
    return (
        <svg viewBox="0 0 497 327" className="pointer-events-none absolute top-0 left-0 h-[327px] w-[497px]" shapeRendering="crispEdges" aria-hidden="true">
            <clipPath id="leftMask"><path d="M8 58h210v158h-176l-8-6-1-8 5-16-1-60-6-42H8z" /></clipPath>
            <clipPath id="rightMask"><path d="M206 58h180v60H255c-10-2-15-6-17-12l1-12h-33z" /></clipPath>
            <clipPath id="gapMask"><path d="M270 57h53l-7 10z" /></clipPath>
            <path d="M8 59C30 54 45 52 60 48h197v11z" fill="#c8c5bf" />
            <path d="M98 48c0-32 30-30 42-14l2 14z" fill="#52628f" />
            <path d="M109 33h11v15h-11zM131 37h10v11h-10z" fill="#465a91" />
            <path d="M155 48c-3-27 31-29 32 0z" fill="#4f6190" />
            <path d="M165 33h11v15h-11z" fill="#425488" />
            <g clipPath="url(#leftMask)"><Blocks rows={leftBlocks} x={7} y={58} /></g>
            <path d="M7 58h11v11H7zM7 69h11v10z" fill="#9fa9bb" />
            <path d="M18 58h11v11H18z" fill="#b0bdce" />
            <path d="M7 69h22v15c-12 2-19-5-22-12z" fill="#ccd1d9" />
            <g clipPath="url(#rightMask)"><Blocks rows={rightBlocks} x={205} y={58} /></g>
            <path d="M205 58h11v11h-11z" fill="#c1cdd9" />
            <path d="M216 58h11v11h-11z" fill="#c8cfd7" />
            <path d="M205 69h11v19h-11z" fill="#c9cfdb" />
            <path d="M216 69h11v19h-11z" fill="#d6dde4" />
            <g clipPath="url(#gapMask)">
                <path d="M270 57h53l-7 10z" fill="#fff" />
                <text x="307" y="67" fontSize="10" fontFamily="Liberation Mono, monospace">CT</text>
            </g>
            <path d="M320 59c4-9 20-11 30-10 16-2 32 0 37 10z" fill="#c5c5c1" />
        </svg>
    );
}

function DataSourceDialog() {
    return (
        <Dialog title="数据源" active className="top-[216px] left-[476px] w-[497px]">
            <div className="flex h-[35px] items-center pr-[9px] pl-1 text-[12px]">
                <label htmlFor="look-in">查找范围:</label>
                <div className={clsx('ml-auto flex h-[22px] w-[194px] shrink-0 items-stretch bg-white p-px', sunken)}>
                    <span className="flex flex-1 items-center bg-[#08246b] pl-[2px] text-white">
                        <Icon name="dataset" />
                        <select id="look-in" className="ml-[3px] min-w-0 flex-1 appearance-none bg-[#08246b] font-['Noto_Sans',sans-serif] text-[12px] leading-4 outline-none">
                            <option>OSM_SDEH.tr</option>
                        </select>
                    </span>
                    <span className={clsx('flex w-4 items-center justify-center', raised)}><Arrow /></span>
                </div>
                <div className="ml-[6px] flex items-center gap-px">
                    {browserTools.map((item, i) => {
                        if (item === '|') return <Separator key={i} />;
                        if (item === 'v') return <span key={i} className="flex w-[14px] justify-center"><Arrow className="h-[6px] w-[6px] fill-black" /></span>;
                        return <ToolButton key={i} name={item} />;
                    })}
                </div>
            </div>
            <div className={clsx('mr-[6px] ml-[5px] flex h-[189px] bg-white pt-px pl-px', sunken)}>
                <ul className="w-[196px]">{leftItems.map(([kind, name], i) => <FeatureItem key={i} kind={kind} name={name} />)}</ul>
                <ul>{rightItems.map(([kind, name], i) => <FeatureItem key={i} kind={kind} name={name} />)}</ul>
            </div>
            <form className="grid grid-cols-[80px_1fr_75px] items-center gap-y-[5px] pt-[9px] pr-[11px] pb-[19px] pl-[9px] text-[12px]">
                <label htmlFor="item-name" className="pb-[3px]">名称:</label>
                <input id="item-name" type="text" className={clsx('mr-[25px] h-5 bg-white px-1 outline-none', sunken)} />
                <PushButton primary>添加</PushButton>
                <label htmlFor="item-type" className="pb-[3px]">显示类型:</label>
                <div className={clsx('mr-[25px] flex h-[21px] bg-white p-px', sunken)}>
                    <select id="item-type" className="min-w-0 flex-1 appearance-none pt-px pl-px leading-4 outline-none">
                        <option>要素类</option>
                    </select>
                    <span className={clsx('flex w-4 items-center justify-center', raised)}><Arrow /></span>
                </div>
                <PushButton>取消</PushButton>
            </form>
            <Redaction />
        </Dialog>
    );
}

export default function App() {
    return (
        <div className="relative flex h-screen w-full overflow-hidden bg-[#d6d3ce] font-['Liberation_Sans','Noto_Sans_CJK_SC',sans-serif] text-black">
            <div className="flex w-[5px] shrink-0 flex-col overflow-hidden border-r border-[#d6d3ce] bg-white">
                <span className={clsx('-ml-[3px] h-[578px] shrink-0 pt-[191px]', mono)}>4-</span>
                <span className="h-[26px] shrink-0 border-t border-b-2 border-t-[#d6d3ce] border-b-[#424142] bg-[#d6d3ce]" />
            </div>
            <div className="mt-px flex min-w-0 flex-1 flex-col border-t border-r border-l border-t-white border-r-[#424142] border-l-white pt-[2px] pr-[3px] pl-[2px]">
                <TitleBar />
                <div className="flex min-h-0 flex-1 flex-col bg-linear-to-r from-[#ded8d0] to-[#fdf6fe]">
                    <nav className="flex h-6 shrink-0 items-center gap-4 pl-3 text-[12px]">
                        {menus.map(([label, key]) => (
                            <button key={label} type="button" className="flex items-baseline whitespace-nowrap">{label}<span className={mono}>({key})</span></button>
                        ))}
                    </nav>
                    <div className="flex shrink-0 flex-col gap-[2px] pb-px">
                        <Toolbar items={standardTools} />
                        <Toolbar items={navTools} />
                    </div>
                    <div className="flex min-h-0 flex-1">
                        <ContentsPanel />
                        <span className="w-1 shrink-0" />
                        <MapArea />
                        <div className="flex w-5 flex-col pt-[2px]">
                            <DockTab icon="catalog" label="目录" />
                            <DockTab icon="search" label="搜索" />
                        </div>
                    </div>
                </div>
                <footer className="flex h-[18px] shrink-0 items-end bg-[#d6d3ce] text-[12px]">
                    <span className="ml-auto h-4 w-[127px] border-l border-[#e6e3de]" />
                    <span className="h-4 w-[10px] border-l border-[#e6e3de]" />
                    <span className="flex h-4 w-[282px] items-center border-l border-[#e6e3de] pt-1 pl-[13px] whitespace-pre"><span className={mono}>93.35  27.325 </span>十进制度</span>
                    <svg viewBox="0 0 14 14" className="h-[14px] w-[14px]"><path d="M1 14L14 1M6 14l8-8M11 14l3-3" stroke="#848284" strokeWidth="1.500" /></svg>
                </footer>
            </div>
            <LayerProperties />
            <DataSourceDialog />
            <p className="pointer-events-none absolute right-[14px] bottom-[3px] flex items-center text-[20px] leading-8 whitespace-pre text-[#8c8c8c]/80 [text-shadow:-1px_-1px_0_#ffffffb0]">
                <span className="text-[17px]">CSDN @</span>实施工程师木易
            </p>
        </div>
    );
}
